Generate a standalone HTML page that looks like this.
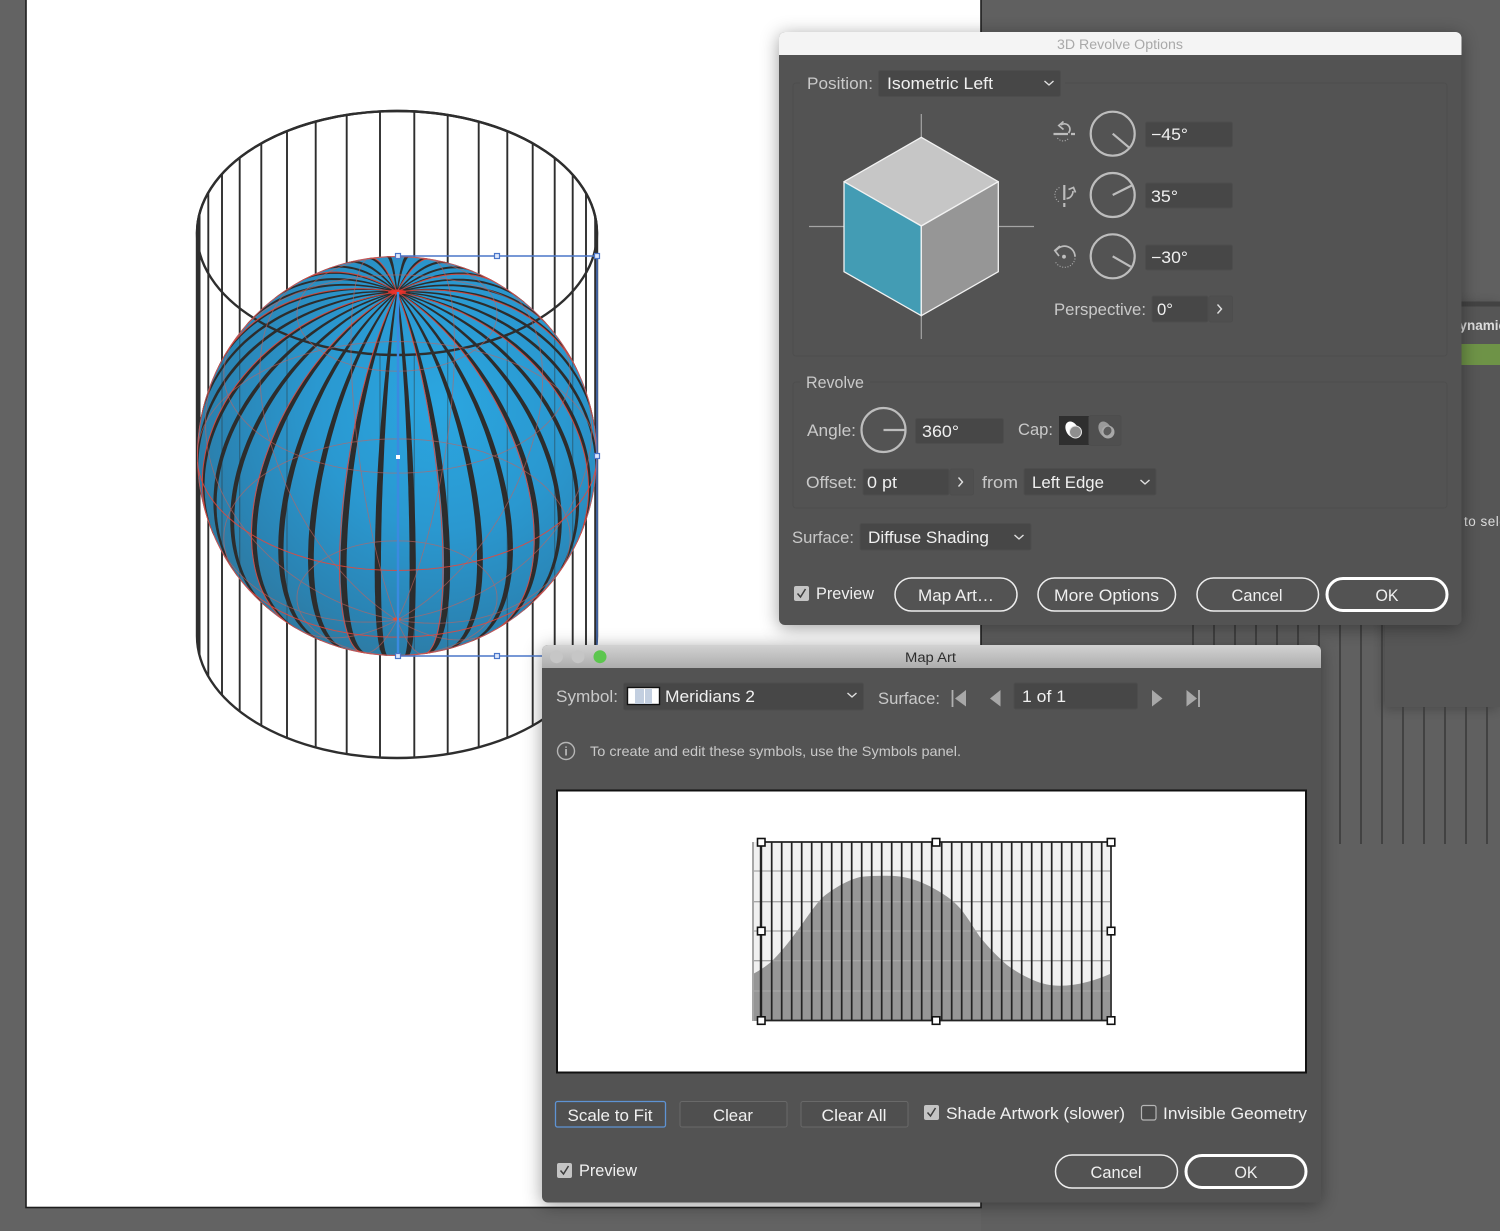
<!DOCTYPE html>
<html><head><meta charset="utf-8"><style>
html,body{margin:0;padding:0;background:#636363;width:1500px;height:1231px;overflow:hidden}
svg{display:block}
text{font-family:"Liberation Sans",sans-serif;font-size:16.5px;fill:#c9c9c9}
.v{fill:#f0f0f0}
.b{fill:#f0f0f0;text-anchor:middle}
.f{fill:#474747;stroke:#4d4d4d;stroke-width:1}
.fs{fill:none;stroke:#4e4e4e;stroke-width:1}
.ch{fill:none;stroke:#e0e0e0;stroke-width:1.4}
.btn{fill:#535353;stroke:#eee;stroke-width:1.5}
.ok{fill:#535353;stroke:#fff;stroke-width:3}
.dial{fill:none;stroke:#bdbdbd;stroke-width:2.2}
.ic{fill:none;stroke:#bcbcbc;stroke-width:1.7}
.dot{fill:none;stroke:#a8a8a8;stroke-width:1.1;stroke-dasharray:1.1 1.6}
.cyl line{stroke:#2e2e2e;stroke-width:1.9}
.h{fill:#dfe8fb;stroke:#4a76c9;stroke-width:1.2}
.gh{fill:#fff;stroke:#111;stroke-width:1.6}
.bg line{stroke:#3b3b3b;stroke-width:1.6}
.gl line{stroke:#222;stroke-width:1.7}
</style></head><body>
<svg xmlns="http://www.w3.org/2000/svg" width="1500" height="1231" viewBox="0 0 1500 1231">
<defs>
<clipPath id="cy"><path d="M197,233A200,122 0 0 1 597,233L597,636A200,122 0 0 1 197,636Z"/></clipPath>
<clipPath id="sp"><circle cx="397" cy="456" r="200"/></clipPath>
<radialGradient id="sg" gradientUnits="userSpaceOnUse" cx="440" cy="405" r="275">
<stop offset="0" stop-color="#2ba6e0"/><stop offset=".45" stop-color="#2a98d0"/><stop offset=".8" stop-color="#2a84b4"/><stop offset="1" stop-color="#2f789e"/></radialGradient>
<linearGradient id="t2" x1="0" y1="0" x2="0" y2="1"><stop offset="0" stop-color="#d2d2d2"/><stop offset="1" stop-color="#adadad"/></linearGradient>
<filter id="sh" x="-10%" y="-10%" width="120%" height="120%"><feDropShadow dx="0" dy="3" stdDeviation="9" flood-color="#000" flood-opacity=".38"/></filter>
<filter id="sh2" x="-10%" y="-10%" width="120%" height="120%"><feDropShadow dx="-2" dy="2" stdDeviation="6" flood-color="#000" flood-opacity=".25"/></filter>
</defs>

<rect width="1500" height="1231" fill="#636363"/>
<rect x="981" y="0" width="519" height="1231" fill="#606060"/>

<!-- background panel -->
<rect x="1385" y="302" width="115" height="405" fill="#575757" filter="url(#sh2)"/>
<rect x="1440" y="301.500" width="60" height="5" fill="#434343"/>
<rect x="1440" y="344" width="60" height="21" fill="#6e9347"/>
<text x="1449.700" y="330" style="font-size:13.500px;font-weight:bold;fill:#ddd">Dynamic</text>
<text x="1464" y="526" style="font-size:13.500px;fill:#ddd;letter-spacing:.5px">to select</text>

<g class="bg">
<line x1="1193" y1="600" x2="1193" y2="650"/><line x1="1214" y1="600" x2="1214" y2="650"/><line x1="1235" y1="600" x2="1235" y2="650"/><line x1="1256" y1="600" x2="1256" y2="650"/><line x1="1277" y1="600" x2="1277" y2="650"/><line x1="1298" y1="600" x2="1298" y2="650"/><line x1="1319" y1="600" x2="1319" y2="650"/>
<line x1="1340" y1="600" x2="1340" y2="844"/><line x1="1361" y1="600" x2="1361" y2="844"/><line x1="1382" y1="600" x2="1382" y2="844"/>
<line x1="1403" y1="707" x2="1403" y2="844"/><line x1="1424" y1="707" x2="1424" y2="844"/><line x1="1445" y1="707" x2="1445" y2="844"/><line x1="1466" y1="707" x2="1466" y2="844"/><line x1="1487" y1="707" x2="1487" y2="844"/>
</g>

<!-- artboard -->
<rect x="26" y="-5" width="955" height="1212.5" fill="#fff" stroke="#1e1e1e" stroke-width="1.6"/>

<!-- cylinder -->
<g clip-path="url(#cy)" class="cyl">
<line x1="199" y1="100" x2="199" y2="770" style="stroke-width:3"/><line x1="208.3" y1="100" x2="208.3" y2="770"/><line x1="222" y1="100" x2="222" y2="770"/><line x1="239.7" y1="100" x2="239.7" y2="770"/><line x1="261.3" y1="100" x2="261.3" y2="770"/><line x1="287" y1="100" x2="287" y2="770"/><line x1="315.7" y1="100" x2="315.7" y2="770"/><line x1="346.7" y1="100" x2="346.7" y2="770"/><line x1="380" y1="100" x2="380" y2="770"/><line x1="414.3" y1="100" x2="414.3" y2="770"/><line x1="447.7" y1="100" x2="447.7" y2="770"/><line x1="478.7" y1="100" x2="478.7" y2="770"/><line x1="507.3" y1="100" x2="507.3" y2="770"/><line x1="532.7" y1="100" x2="532.7" y2="770"/><line x1="554.7" y1="100" x2="554.7" y2="770"/><line x1="572.7" y1="100" x2="572.7" y2="770"/><line x1="586" y1="100" x2="586" y2="770"/><line x1="595.7" y1="100" x2="595.7" y2="770" style="stroke-width:3"/>
</g>
<path d="M197,233A200,122 0 0 1 597,233L597,636A200,122 0 0 1 197,636Z" fill="none" stroke="#2e2e2e" stroke-width="2.4"/>
<ellipse cx="397" cy="233" rx="200" ry="122" fill="none" stroke="#2e2e2e" stroke-width="2.4"/>

<!-- sphere -->
<circle cx="397" cy="456" r="200" fill="url(#sg)"/>
<g clip-path="url(#sp)">
<path id="stripes" fill="#2d2d2d" stroke="#2d2d2d" stroke-width="1" d=""/>
<g class="cyl" opacity=".4">
<line x1="222" y1="300" x2="222" y2="650" style="stroke-width:1.2"/><line x1="239.7" y1="320" x2="239.7" y2="650" style="stroke-width:1.2"/><line x1="287" y1="340" x2="287" y2="650" style="stroke-width:1.2"/><line x1="380" y1="355" x2="380" y2="650" style="stroke-width:1.2"/><line x1="414.3" y1="355" x2="414.3" y2="650" style="stroke-width:1.2"/><line x1="447.7" y1="350" x2="447.7" y2="650" style="stroke-width:1.2"/><line x1="507.3" y1="335" x2="507.3" y2="650" style="stroke-width:1.2"/><line x1="554.7" y1="310" x2="554.7" y2="650" style="stroke-width:1.2"/><line x1="572.7" y1="300" x2="572.7" y2="650" style="stroke-width:1.2"/>
</g>
<path d="M197,233A200,122 0 0 0 597,233" fill="none" stroke="#2e2e2e" stroke-width="2.4"/>
<path id="wireb" fill="none" stroke="#c4625e" stroke-width=".9" opacity=".62" d=""/>
<path id="wiref" fill="none" stroke="#e8473a" stroke-width="1" opacity=".85" d=""/>
</g>
<circle cx="397" cy="456" r="199.5" fill="none" stroke="#d8504a" stroke-width="1" opacity=".85"/>
<ellipse cx="397" cy="292" rx="9" ry="2.5" fill="#f0302a" opacity=".85"/>
<ellipse cx="397" cy="619" rx="4" ry="1.6" fill="#f04a2a"/>

<!-- selection -->
<path d="M398,256H597V656H398" fill="none" stroke="#4a76c9" stroke-width="1.4"/>
<line x1="398" y1="292" x2="398" y2="656" stroke="#3b8ae0" stroke-width="2.4"/>
<rect x="395.5" y="253.500" width="5" height="5" class="h"/><rect x="494.500" y="253.500" width="5" height="5" class="h"/><rect x="594.5" y="253.500" width="5" height="5" class="h"/>
<rect x="594.5" y="453.500" width="5" height="5" class="h"/><rect x="396" y="455" width="4" height="4" fill="#fff"/>
<rect x="395.500" y="653.500" width="5" height="5" class="h"/><rect x="494.500" y="653.500" width="5" height="5" class="h"/>

<!-- 3D Revolve dialog -->
<g filter="url(#sh)">
<rect x="779" y="32" width="682.500" height="593" rx="6" fill="#535353"/>
</g>
<path d="M779,55V38a6,6 0 0 1 6,-6H1455.500a6,6 0 0 1 6,6V55Z" fill="#f4f4f4"/>
<text x="1057" y="49" textLength="126" lengthAdjust="spacingAndGlyphs" style="font-size:13.5px;fill:#a9a9a9">3D Revolve Options</text>

<rect x="793" y="83" width="654" height="273" rx="3" class="fs"/>
<rect x="800" y="75" width="265" height="16" fill="#535353"/>
<text x="807" y="89" textLength="66" lengthAdjust="spacingAndGlyphs">Position:</text>
<rect x="878.500" y="70.500" width="182" height="26" rx="2" class="f"/>
<text x="887" y="89" textLength="106" lengthAdjust="spacingAndGlyphs" class="v">Isometric Left</text>
<path d="M1044.500,81l4.500,4 4.500,-4" class="ch"/>

<g stroke="#a5a5a5" stroke-width="1.2"><line x1="921.300" y1="114" x2="921.300" y2="137"/><line x1="921.300" y1="316" x2="921.300" y2="339"/><line x1="809" y1="226.500" x2="844" y2="226.500"/><line x1="998" y1="226.500" x2="1034" y2="226.500"/></g>
<g stroke="#f2f2f2" stroke-width="1.3" stroke-linejoin="round">
<path d="M921.300,137.300L998.300,181.700L921.300,226L844,181.700Z" fill="#c6c6c6"/>
<path d="M844,181.700L921.300,226V315.700L844,271.700Z" fill="#439cb4"/>
<path d="M998.300,181.700L921.300,226V315.700L998.300,271.700Z" fill="#969696"/>
</g>

<circle cx="1112.700" cy="133.700" r="22" class="dial"/><path d="M1112.700,133.700L1130,148.300" class="dial"/>
<circle cx="1112.700" cy="195" r="22" class="dial"/><path d="M1112.700,195L1132.700,185" class="dial"/>
<circle cx="1112.700" cy="256.300" r="22" class="dial"/><path d="M1112.700,256.300L1130.700,266.700" class="dial"/>

<path d="M1053.500,134H1068M1071,134H1075" class="ic" style="stroke-width:2.200"/>
<path d="M1061,125A5.500,5.500 0 0 1 1068.500,133" class="ic"/><path d="M1063.500,121.500L1058.800,125.500L1063.500,129.500" class="ic"/>
<path d="M1057.500,138A7,7 0 0 0 1068.500,138.500" class="dot"/>
<path d="M1064.300,185V200M1064.300,203V207" class="ic" style="stroke-width:2.200"/>
<path d="M1066.500,198.500A6.500,7.500 0 0 0 1073,191" class="ic"/><path d="M1068.500,189.500L1073.500,187.500L1075.500,192.500" class="ic"/>
<path d="M1059.500,187.500A8,8 0 0 0 1059.500,202" class="dot"/>
<path d="M1056,250.500A10.500,10.500 0 0 1 1075,256.700" class="ic"/><path d="M1060,246L1054.800,250.500L1059,256" class="ic"/>
<circle cx="1064" cy="256.700" r="1.900" fill="#c0c0c0"/>
<path d="M1075,258.500A10.500,10.500 0 0 1 1055,261" class="dot"/>

<rect x="1145.500" y="122" width="87" height="25" rx="2" class="f"/><text x="1151" y="140" textLength="37" lengthAdjust="spacingAndGlyphs" class="v">−45°</text>
<rect x="1145.500" y="183" width="87" height="25" rx="2" class="f"/><text x="1151" y="202" textLength="27" lengthAdjust="spacingAndGlyphs" class="v">35°</text>
<rect x="1145.500" y="245" width="87" height="25" rx="2" class="f"/><text x="1151" y="263" textLength="37" lengthAdjust="spacingAndGlyphs" class="v">−30°</text>

<text x="1054" y="315" textLength="92" lengthAdjust="spacingAndGlyphs">Perspective:</text>
<rect x="1152" y="296" width="56" height="26" rx="2" class="f"/><text x="1157" y="315" textLength="16" lengthAdjust="spacingAndGlyphs" class="v">0°</text>
<rect x="1209" y="296" width="23.500" height="26" rx="2" fill="#4f4f4f" stroke="#4d4d4d"/><path d="M1217.500,304.500l4,4.500 -4,4.500" class="ch"/>

<rect x="793" y="382" width="654" height="126" rx="3" class="fs"/>
<rect x="800" y="375" width="70" height="14" fill="#535353"/>
<text x="806" y="388" textLength="58" lengthAdjust="spacingAndGlyphs">Revolve</text>
<text x="807" y="436" textLength="49" lengthAdjust="spacingAndGlyphs">Angle:</text>
<circle cx="883.500" cy="430" r="22" class="dial"/><path d="M883.500,430H905" class="dial"/>
<rect x="915.500" y="418.500" width="88" height="25" rx="2" class="f"/><text x="922" y="437" textLength="37" lengthAdjust="spacingAndGlyphs" class="v">360°</text>
<text x="1018" y="435" textLength="35" lengthAdjust="spacingAndGlyphs">Cap:</text>
<rect x="1059" y="416" width="30" height="29" fill="#2f2f2f"/>
<rect x="1089" y="415.500" width="32" height="30" rx="2" fill="#4f4f4f" stroke="#4d4d4d"/>
<ellipse cx="1072" cy="429.500" rx="6" ry="8.500" transform="rotate(-28 1072 429.500)" fill="#fff"/>
<circle cx="1075.500" cy="432" r="6" fill="#8f8f8f" stroke="#e8e8e8" stroke-width="1"/>
<ellipse cx="1105" cy="429.500" rx="6" ry="8.500" transform="rotate(-28 1105 429.500)" fill="#9a9a9a"/>
<circle cx="1108" cy="432" r="6.500" fill="#a8a8a8"/><ellipse cx="1107.500" cy="431" rx="3.800" ry="4.500" transform="rotate(30 1107.500 431)" fill="#5c5c5c"/>

<text x="806" y="488" textLength="51" lengthAdjust="spacingAndGlyphs">Offset:</text>
<rect x="863" y="469" width="86" height="26" rx="2" class="f"/><text x="867" y="488" textLength="30" lengthAdjust="spacingAndGlyphs" class="v">0 pt</text>
<rect x="950" y="469" width="23.500" height="26" rx="2" fill="#4f4f4f" stroke="#4d4d4d"/><path d="M958.500,477.500l4,4.500 -4,4.500" class="ch"/>
<text x="982" y="488" textLength="36" lengthAdjust="spacingAndGlyphs">from</text>
<rect x="1024" y="468.500" width="132" height="26.500" rx="2" class="f"/><text x="1032" y="488" textLength="72" lengthAdjust="spacingAndGlyphs" class="v">Left Edge</text>
<path d="M1140.500,480l4.500,4 4.500,-4" class="ch"/>

<text x="792" y="543" textLength="62" lengthAdjust="spacingAndGlyphs">Surface:</text>
<rect x="860" y="523.500" width="171" height="26.500" rx="2" class="f"/><text x="868" y="543" textLength="121" lengthAdjust="spacingAndGlyphs" class="v">Diffuse Shading</text>
<path d="M1014.500,535l4.500,4 4.500,-4" class="ch"/>

<rect x="794" y="586" width="15" height="15" rx="2" fill="#c4c4c4"/><path d="M797.500,593.500l3,3.500 5,-8" fill="none" stroke="#3c3c3c" stroke-width="1.500"/>
<text x="816" y="599" textLength="58" lengthAdjust="spacingAndGlyphs" class="v">Preview</text>
<rect x="895" y="578" width="122" height="33" rx="16.500" class="btn"/><text x="956" y="601" textLength="76" lengthAdjust="spacingAndGlyphs" class="b">Map Art…</text>
<rect x="1038" y="578" width="137.500" height="33" rx="16.500" class="btn"/><text x="1106.500" y="601" textLength="105" lengthAdjust="spacingAndGlyphs" class="b">More Options</text>
<rect x="1197" y="578" width="121.500" height="33" rx="16.500" class="btn"/><text x="1257" y="601" textLength="51" lengthAdjust="spacingAndGlyphs" class="b">Cancel</text>
<rect x="1327" y="578.500" width="120" height="32" rx="16" class="ok"/><text x="1387" y="601" textLength="23" lengthAdjust="spacingAndGlyphs" class="b">OK</text>

<!-- Map Art dialog -->
<g filter="url(#sh)"><rect x="542" y="645" width="779" height="557.500" rx="6" fill="#535353"/></g>
<path d="M542,668V651a6,6 0 0 1 6,-6H1315a6,6 0 0 1 6,6V668Z" fill="url(#t2)"/>
<circle cx="556.500" cy="656.700" r="6.500" fill="#c6c6c6"/><circle cx="578" cy="656.700" r="6.500" fill="#c6c6c6"/><circle cx="600" cy="656.700" r="6.500" fill="#5cc64e"/>
<text x="905" y="662" textLength="51" lengthAdjust="spacingAndGlyphs" style="font-size:13.500px;fill:#2e2e2e">Map Art</text>

<text x="556" y="702" textLength="62" lengthAdjust="spacingAndGlyphs">Symbol:</text>
<rect x="623.500" y="683" width="240" height="27" rx="2" class="f"/>
<rect x="627.500" y="687.500" width="32" height="17" fill="#fff" stroke="#111" stroke-width="1.400"/>
<rect x="635" y="689" width="9" height="15" fill="#c3cfe0"/><rect x="645" y="689" width="7" height="15" fill="#c3cfe0"/>
<text x="665" y="702" textLength="90" lengthAdjust="spacingAndGlyphs" class="v">Meridians 2</text>
<path d="M847.500,693l4.500,4 4.500,-4" class="ch"/>
<text x="878" y="704" textLength="62" lengthAdjust="spacingAndGlyphs">Surface:</text>
<path d="M952.500,690V707" stroke="#b0b0b0" stroke-width="1.800"/><path d="M966,690V706.500L955,698.500Z" fill="#a8a8a8"/>
<path d="M1000.500,690V706.500L990,698.500Z" fill="#a8a8a8"/>
<rect x="1014" y="683" width="123.500" height="26" rx="2" class="f"/><text x="1022" y="702" textLength="44" lengthAdjust="spacingAndGlyphs" class="v">1 of 1</text>
<path d="M1152,690V706.500L1162.500,698.500Z" fill="#a8a8a8"/>
<path d="M1186.500,690V706.500L1197,698.500Z" fill="#a8a8a8"/><path d="M1199,690V707" stroke="#b0b0b0" stroke-width="1.800"/>

<circle cx="566" cy="751" r="8.500" fill="none" stroke="#b5b5b5" stroke-width="1.400"/>
<text x="566" y="755.500" style="font-size:12px;font-weight:bold;fill:#bbb;text-anchor:middle">i</text>
<text x="590" y="756" textLength="371" lengthAdjust="spacingAndGlyphs" style="font-size:14px;fill:#c9c9c9">To create and edit these symbols, use the Symbols panel.</text>

<rect x="557" y="790.500" width="749" height="282" fill="#fff" stroke="#111" stroke-width="2"/>
<rect x="753" y="842" width="357" height="179" fill="#f0f0f0"/>
<path d="M753,974C760,970 767,966 773,960C783,950 792,938 800,927C808,916 815,905 823,897C834,888 848,880 860,877C868,876 875,875.700 883,875.700C890,875.700 897,876 903,877C914,879 924,883 933,888C942,893 950,898 957,905C966,914 973,927 980,937C989,948 998,957 1007,965C1015,971 1024,976 1033,980C1042,984 1051,985.700 1060,985.700C1069,985.700 1078,984.500 1087,982C1095,980 1103,977 1110,974V1021H753Z" fill="#969696"/>
<g stroke="#a6a6a6" stroke-width="1.300"><line x1="753" y1="871" x2="1110" y2="871"/><line x1="753" y1="901.700" x2="1110" y2="901.700"/><line x1="753" y1="931" x2="1110" y2="931"/><line x1="753" y1="960.700" x2="1110" y2="960.700"/><line x1="753" y1="991" x2="1110" y2="991"/><line x1="753" y1="842" x2="753" y2="1021" stroke-width="2"/></g>
<g class="gl">
<line x1="761" y1="842" x2="761" y2="1021" style="stroke-width:2.400"/><line x1="771.700" y1="842" x2="771.700" y2="1021"/><line x1="781.700" y1="842" x2="781.700" y2="1021"/><line x1="791.700" y1="842" x2="791.700" y2="1021"/><line x1="801.700" y1="842" x2="801.700" y2="1021"/><line x1="811.700" y1="842" x2="811.700" y2="1021"/><line x1="821.700" y1="842" x2="821.700" y2="1021"/><line x1="831.700" y1="842" x2="831.700" y2="1021"/><line x1="841.700" y1="842" x2="841.700" y2="1021"/><line x1="851.700" y1="842" x2="851.700" y2="1021"/><line x1="861.700" y1="842" x2="861.700" y2="1021"/><line x1="871.700" y1="842" x2="871.700" y2="1021"/><line x1="881.700" y1="842" x2="881.700" y2="1021"/><line x1="891.700" y1="842" x2="891.700" y2="1021"/><line x1="901.700" y1="842" x2="901.700" y2="1021"/><line x1="911.700" y1="842" x2="911.700" y2="1021"/><line x1="921.700" y1="842" x2="921.700" y2="1021"/><line x1="931.700" y1="842" x2="931.700" y2="1021"/><line x1="941.700" y1="842" x2="941.700" y2="1021"/><line x1="951.700" y1="842" x2="951.700" y2="1021"/><line x1="961.700" y1="842" x2="961.700" y2="1021"/><line x1="971.700" y1="842" x2="971.700" y2="1021"/><line x1="981.700" y1="842" x2="981.700" y2="1021"/><line x1="991.700" y1="842" x2="991.700" y2="1021"/><line x1="1001.700" y1="842" x2="1001.700" y2="1021"/><line x1="1011.700" y1="842" x2="1011.700" y2="1021"/><line x1="1021.700" y1="842" x2="1021.700" y2="1021"/><line x1="1031.700" y1="842" x2="1031.700" y2="1021"/><line x1="1041.700" y1="842" x2="1041.700" y2="1021"/><line x1="1051.700" y1="842" x2="1051.700" y2="1021"/><line x1="1061.700" y1="842" x2="1061.700" y2="1021"/><line x1="1071.700" y1="842" x2="1071.700" y2="1021"/><line x1="1081.700" y1="842" x2="1081.700" y2="1021"/><line x1="1091.700" y1="842" x2="1091.700" y2="1021"/><line x1="1101.700" y1="842" x2="1101.700" y2="1021"/><line x1="1111" y1="842" x2="1111" y2="1021"/>
<line x1="761" y1="842" x2="1111" y2="842" style="stroke-width:1.800"/><line x1="761" y1="1020.500" x2="1111" y2="1020.500" style="stroke-width:1.800"/>
</g>
<rect x="757.500" y="838.500" width="7.500" height="7.500" class="gh"/><rect x="932.300" y="838.500" width="7.500" height="7.500" class="gh"/><rect x="1107.300" y="838.500" width="7.500" height="7.500" class="gh"/>
<rect x="757.500" y="927.300" width="7.500" height="7.500" class="gh"/><rect x="1107.300" y="927.300" width="7.500" height="7.500" class="gh"/>
<rect x="757.500" y="1016.800" width="7.500" height="7.500" class="gh"/><rect x="932.300" y="1016.800" width="7.500" height="7.500" class="gh"/><rect x="1107.300" y="1016.800" width="7.500" height="7.500" class="gh"/>

<rect x="555.500" y="1101.500" width="110" height="25.500" rx="2" fill="#4f4f4f" stroke="#5e93d4" stroke-width="1.300"/><text x="610" y="1121" textLength="85" lengthAdjust="spacingAndGlyphs" class="b">Scale to Fit</text>
<rect x="680" y="1101.500" width="107" height="25.500" rx="2" fill="#4f4f4f" stroke="#696969"/><text x="733" y="1121" textLength="40" lengthAdjust="spacingAndGlyphs" class="b">Clear</text>
<rect x="801" y="1101.500" width="107" height="25.500" rx="2" fill="#4f4f4f" stroke="#696969"/><text x="854" y="1121" textLength="65" lengthAdjust="spacingAndGlyphs" class="b">Clear All</text>
<rect x="924" y="1105" width="15" height="15" rx="2" fill="#c4c4c4"/><path d="M927.500,1112.500l3,3.500 5,-8" fill="none" stroke="#3c3c3c" stroke-width="1.500"/>
<text x="946" y="1119" textLength="179" lengthAdjust="spacingAndGlyphs" class="v">Shade Artwork (slower)</text>
<rect x="1141.500" y="1105.500" width="14.500" height="14.500" rx="2" fill="#4a4a4a" stroke="#b5b5b5" stroke-width="1.200"/>
<text x="1163" y="1119" textLength="144" lengthAdjust="spacingAndGlyphs" class="v">Invisible Geometry</text>
<rect x="557" y="1163" width="15" height="15" rx="2" fill="#c4c4c4"/><path d="M560.500,1170.500l3,3.500 5,-8" fill="none" stroke="#3c3c3c" stroke-width="1.500"/>
<text x="579" y="1176" textLength="58" lengthAdjust="spacingAndGlyphs" class="v">Preview</text>
<rect x="1055.500" y="1155" width="122" height="33" rx="16.500" class="btn"/><text x="1116" y="1178" textLength="51" lengthAdjust="spacingAndGlyphs" class="b">Cancel</text>
<rect x="1186" y="1155.500" width="120" height="32" rx="16" class="ok"/><text x="1246" y="1178" textLength="23" lengthAdjust="spacingAndGlyphs" class="b">OK</text>
</svg>
<script>
(function(){
var cx=397,cy=456,r=200,t=Math.asin(Math.sqrt(1-0.82*0.82)),D=Math.PI/180;
function P(lat,lon){var a=lat*D,o=lon*D,ca=Math.cos(a),sa=Math.sin(a),co=Math.cos(o);
 return {x:cx+r*ca*Math.sin(o),y:cy+r*(-sa*Math.cos(t)+ca*co*Math.sin(t)),z:sa*Math.sin(t)+ca*co*Math.cos(t)};}
function f(n){return n.toFixed(1);}
var s="";
for(var k=0;k<36;k++){var lon=-5.5+10*k,L=[],R=[];
 for(var lat=-90;lat<=90;lat+=2){var a=P(lat,lon-0.75),b=P(lat,lon+0.75);
  if(a.z>=0&&b.z>=0){L.push(f(a.x)+","+f(a.y));R.unshift(f(b.x)+","+f(b.y));}}
 if(L.length>1)s+="M"+L.join("L")+"L"+R.join("L")+"Z";}
document.getElementById("stripes").setAttribute("d",s);
var F="",B="";
function add(fn,st,en,step,dim){var pts=[],fr=null;
 function flush(){if(pts.length>1){var d="M"+pts.join("L");if(fr&&!dim)F+=d;else B+=d;}pts=[];}
 for(var v=st;v<=en;v+=step){var p=fn(v),isF=p.z>=0;if(fr===null)fr=isF;
  if(isF!==fr){flush();fr=isF;}pts.push(f(p.x)+","+f(p.y));}
 flush();}
for(var m=0;m<12;m++){(function(l){add(function(v){return P(v,l);},-90,90,2,false);})(-16.7+30*m);}
[-60,-30,0,30,60].forEach(function(la){add(function(v){return P(la,v);},0,360,3,la>=30);});
document.getElementById("wiref").setAttribute("d",F);
document.getElementById("wireb").setAttribute("d",B);
})();
</script>
</body></html>
